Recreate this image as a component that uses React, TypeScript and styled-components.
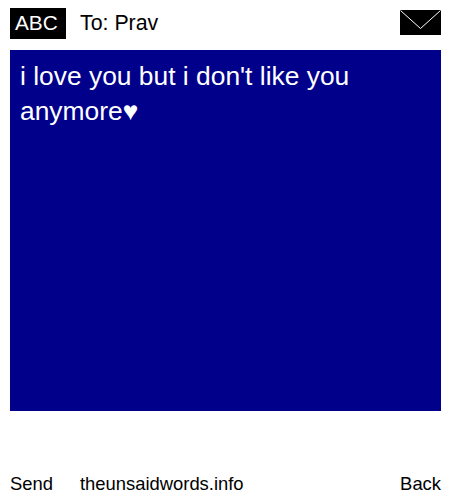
import React from "react";
import styled, { createGlobalStyle } from "styled-components";

const Global = createGlobalStyle`
  html, body { margin: 0; padding: 0; background: #fff; }
  body { font-family: "Liberation Sans", Arial, sans-serif; color: #000; }
`;

const Page = styled.div`
  width: 450px;
  height: 500px;
  box-sizing: border-box;
  padding: 8px 9px 0 10px;
  display: flex;
  flex-direction: column;
`;

const Header = styled.header`
  height: 31px;
  display: flex;
  align-items: flex-start;
`;

const Mode = styled.div`
  width: 56px;
  height: 31px;
  box-sizing: border-box;
  padding-left: 5px;
  background: #000;
  color: #fff;
  font-size: 20.8px;
  line-height: 30px;
`;

const To = styled.div`
  margin-left: 14px;
  font-size: 21.33px;
  line-height: 31px;
  flex: 1;
`;

const Envelope = styled.svg`
  width: 41px;
  height: 25px;
  margin-top: 2px;
  display: block;
`;

const Message = styled.main`
  margin-top: 11px;
  width: 431px;
  height: 361px;
  box-sizing: border-box;
  background: #00008b;
  color: #fff;
  font-size: 26.4px;
  line-height: 35px;
  padding: 9px 10px;
`;

const Footer = styled.footer`
  margin-top: 62px;
  display: flex;
  font-size: 18.4px;
  line-height: 22px;
`;

const Send = styled.span`
  width: 70px;
`;

const Site = styled.span`
  flex: 1;
`;

export default function App() {
  return (
    <>
      <Global />
      <Page>
        <Header>
          <Mode>ABC</Mode>
          <To>To: Prav</To>
          <Envelope viewBox="0 0 41 25">
            <rect width="41" height="25" fill="#000" />
            <path d="M0.5 0.5 L20.5 18.5 L40.5 0.5" fill="none" stroke="#fff" strokeWidth="1" />
          </Envelope>
        </Header>
        <Message>i love you but i don't like you anymore♥</Message>
        <Footer>
          <Send>Send</Send>
          <Site>theunsaidwords.info</Site>
          <span>Back</span>
        </Footer>
      </Page>
    </>
  );
}
